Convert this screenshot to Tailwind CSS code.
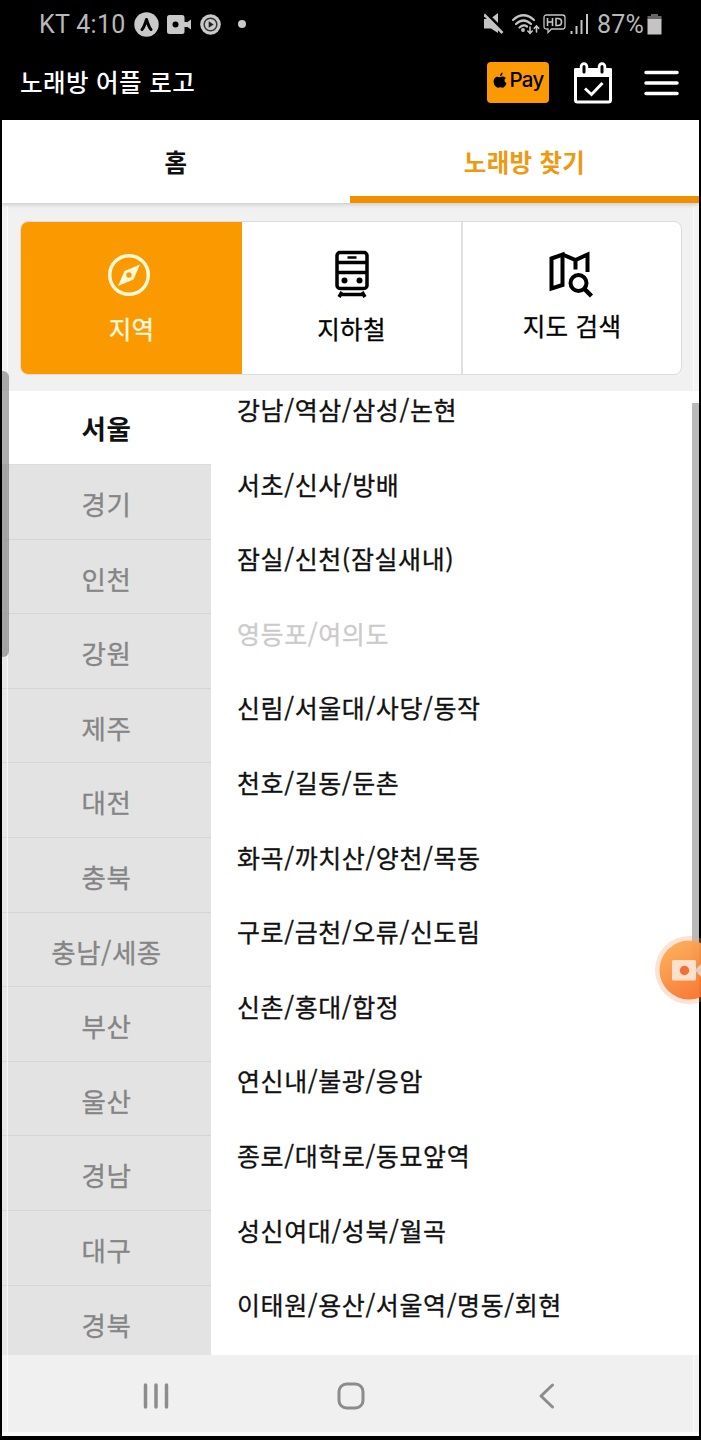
<!DOCTYPE html>
<html lang="ko">
<head>
<meta charset="utf-8">
<title>노래방 찾기</title>
<script src="https://cdn.jsdelivr.net/npm/@tailwindcss/browser@4"></script>
</head>
<body class="w-[701px] h-[1440px] overflow-hidden bg-black font-['Noto_Sans_CJK_KR',sans-serif]">
<div class="relative w-[701px] h-[1440px] overflow-hidden flex flex-col pl-[2px] pr-[2px] pb-[4px]">

  <!-- status bar -->
  <div class="h-[46px] shrink-0 flex items-center pt-[2px] pl-[37px] pr-[37px] text-[#b9b9b9] font-[Roboto,sans-serif] text-[25px] leading-none">
    <span class="w-[86px] whitespace-nowrap tracking-[0.3px]">KT 4:10</span>
    <svg class="ml-[9px]" width="25" height="25" viewBox="0 0 25 25"><circle cx="12.500" cy="12.500" r="12.200" fill="#c9c9c9"/><path d="M8 17.500 Q10 15.500 12.500 7.500 Q15 15.500 17 17.500" fill="none" stroke="#000" stroke-width="3" stroke-linecap="round" stroke-linejoin="round"/></svg>
    <svg class="ml-[8px]" width="24" height="19" viewBox="0 0 24 19"><rect x="0" y="0" width="17.500" height="19" rx="2.500" fill="#c9c9c9"/><path d="M17 9.500 L24 4.500 V14.500 Z M16 7 h4 v5 h-4z" fill="#c9c9c9"/><circle cx="8.500" cy="9.500" r="3" fill="#000"/></svg>
    <svg class="ml-[9px]" width="21" height="21" viewBox="0 0 21 21"><circle cx="10.500" cy="10.500" r="10.300" fill="#c9c9c9"/><circle cx="10.500" cy="10.500" r="6.300" fill="none" stroke="#333" stroke-width="1.500"/><path d="M8.700 7.300 L13.700 10.500 L8.700 13.700Z" fill="#222"/></svg>
    <span class="ml-[17px] size-[8px] rounded-full bg-[#c9c9c9]"></span>
    <div class="ml-auto flex items-center">
      <svg width="20" height="22" viewBox="0 0 20 22"><path d="M0 6 H6 L14 0 V20 L7 15.500 H0Z" fill="#c4c4c4"/><path d="M3 1 L21 19" stroke="#000" stroke-width="3"/><path d="M0 1.500 L18.500 20" stroke="#c4c4c4" stroke-width="2.600"/></svg>
      <svg class="ml-[8px]" width="28" height="22" viewBox="0 0 28 22" fill="none" stroke="#c4c4c4" stroke-width="2.200" stroke-linecap="round"><path d="M1 7 Q11.500 -2.500 22 7"/><path d="M4 11 Q11.500 4 19 11"/><path d="M7.500 14.500 Q11.500 11 15 13.500"/><circle cx="11" cy="17" r=".8" fill="#c4c4c4"/><path d="M18 14 V20 M15.800 18 L18 20.300 L20.200 18 M24.500 19 V13.500 M22.300 15.300 L24.500 13 L26.700 15.300" stroke-width="1.600"/></svg>
      <svg class="ml-[3px]" width="23" height="20" viewBox="0 0 23 20"><path d="M3.500 1 H19.500 Q22 1 22 3.500 V12.500 Q22 15 19.500 15 H8.500 L5 18.500 V15 H3.500 Q1 15 1 12.500 V3.500 Q1 1 3.500 1Z" fill="none" stroke="#c4c4c4" stroke-width="1.300"/><path d="M4.500 4 V12 M4.500 8 H9.500 M9.500 4 V12 M13 4.500 V11.500 H15 Q18.500 11.500 18.500 8 Q18.500 4.500 15 4.500 Z" fill="none" stroke="#c4c4c4" stroke-width="1.600"/></svg>
      <svg class="ml-[4px]" width="19" height="20" viewBox="0 0 19 20"><path d="M1.500 17 V20 M6.500 12 V20 M11.500 6 V20 M17 0 V20" stroke="#c4c4c4" stroke-width="2"/></svg>
      <span class="ml-[8px] w-[49px] whitespace-nowrap tracking-[0.2px]">87%</span>
      <svg class="ml-[1px]" width="15" height="22" viewBox="0 0 15 22"><path d="M4 1 H11 V3 H14.500 V7 H.5 V3 H4Z" fill="#666"/><rect x=".5" y="6" width="14" height="15.500" fill="#c4c4c4"/></svg>
    </div>
  </div>

  <!-- app header -->
  <header class="h-[74px] shrink-0 flex items-center pl-[18px] pr-[20px] text-white">
    <h1 class="text-[24.500px] leading-none font-medium whitespace-nowrap tracking-[0.4px] mt-[-2px]">노래방 어플 로고</h1>
    <div class="ml-auto flex items-center gap-[24px]">
      <div class="w-[62px] h-[41px] mt-[-2px] rounded-[4px] bg-[#fb9902] flex items-center justify-center text-black">
        <svg class="mt-[-4px]" width="14" height="17" viewBox="0 0 15 17"><path d="M10.300 0 Q10.500 3 7.500 4 Q7.400 1 10.300 0Z M7.500 5 Q11 3.300 13.700 5.700 Q10.500 8.500 14.500 11.500 Q13 15.700 10.800 16.300 Q8 15.300 5 16.300 Q1 14.500 .6 9.500 Q.8 5.500 4 4.500 Q5.500 4.300 7.500 5Z"/></svg>
        <span class="ml-[3px] mt-[-3px] font-[Inter,sans-serif] font-medium text-[20.500px] leading-none tracking-[-0.8px]">Pay</span>
      </div>
      <svg class="mt-[-1px]" width="40" height="42" viewBox="0 0 40 42"><rect x="2.500" y="8" width="35" height="32" rx="2" fill="none" stroke="#fff" stroke-width="3"/><path d="M1 7 Q1 6 3 6 H37 Q39 6 39 7 V15 H1Z" fill="#fff"/><path d="M11 10 V4.500 M29 10 V4.500" stroke="#fff" stroke-width="8.500" stroke-linecap="round"/><path d="M11 10 V4.500 M29 10 V4.500" stroke="#000" stroke-width="3" stroke-linecap="round"/><path d="M12 26.500 L18.500 32.500 L29.500 21" fill="none" stroke="#fff" stroke-width="3"/></svg>
      <svg class="ml-[7px]" width="35" height="26" viewBox="0 0 35 26"><path d="M2 2.500 H33 M2 13 H33 M2 23.500 H33" stroke="#fff" stroke-width="3.500" stroke-linecap="round"/></svg>
    </div>
  </header>

  <!-- tabs -->
  <nav class="relative z-10 h-[83px] shrink-0 flex bg-white shadow-[0_1px_5px_rgba(0,0,0,0.2)] text-[24.500px] leading-none font-bold tracking-[0.3px]">
    <div class="w-[348px] flex items-center justify-center pt-[2px] text-[#111]">홈</div>
    <div class="flex-1 flex items-center justify-center border-b-[7px] border-[#f09000] pt-[9px] text-[#ee9911]">노래방 찾기</div>
  </nav>

  <!-- search mode -->
  <section class="h-[188px] shrink-0 bg-[#f1f1f1] pt-[18px] pl-[18px] pr-[17px]">
    <div class="h-[154px] flex rounded-[8px] border border-[#dcdcdc] overflow-hidden bg-white text-[24.500px] leading-none tracking-[0.3px]">
      <div class="w-[221px] bg-[#fb9900] text-[#fffbe0] flex flex-col items-center pt-[31px]">
        <svg class="mr-[5px]" width="44" height="44" viewBox="0 0 44 44"><circle cx="22" cy="22" r="19.300" fill="none" stroke="#fff9d8" stroke-width="3.500"/><path fill-rule="evenodd" d="M33 11.500 L26.500 26.500 L11 33 L17.500 18Z M22 19.300 A2.700 2.700 0 1 0 22 24.700 A2.700 2.700 0 1 0 22 19.300Z" fill="#fff9d8"/></svg>
        <span class="mt-[20px] [-webkit-text-stroke:0.3px]">지역</span>
      </div>
      <div class="w-[219px] flex flex-col items-center pt-[28px] text-black">
        <svg width="36" height="50" viewBox="0 0 36 50" fill="none" stroke="#000" stroke-width="3.500"><rect x="3" y="2.500" width="30" height="36" rx="3"/><path d="M3 12.500 H33 M3 22.500 H33"/><path d="M13.500 7.500 H22.500" stroke-width="2.500"/><circle cx="10.500" cy="30.500" r="3" fill="#000" stroke="none"/><circle cx="25.500" cy="30.500" r="3" fill="#000" stroke="none"/><path d="M7 44.500 H29 M8 42 L5 47 M28 42 L31 47"/></svg>
        <span class="mt-[17px] [-webkit-text-stroke:0.3px]">지하철</span>
      </div>
      <div class="flex-1 border-l-2 border-[#e0e0e0] flex flex-col items-center pt-[29px] text-black">
        <svg class="mr-[2px]" width="46" height="48" viewBox="0 0 46 48" fill="none" stroke="#000" stroke-width="4"><path d="M3.500 7.500 L14.500 3.500 V34 L3.500 37.500Z" /><path d="M14.500 3.500 L27.500 9 L39.500 3.500 V21 M27.500 9 V18.500"/><circle cx="30.500" cy="32" r="8"/><path d="M36 37.500 L43.500 45" stroke-width="4.500"/></svg>
        <span class="mt-[15px] [-webkit-text-stroke:0.3px]">지도 검색</span>
      </div>
    </div>
  </section>

  <!-- region lists -->
  <main class="h-[964px] shrink-0 flex overflow-hidden bg-white leading-none">
    <div class="w-[209px] shrink-0 text-[26.500px] tracking-[0.5px] text-[#858585] text-center">
      <div class="h-[73px] pt-[24px] font-bold text-[#111]">서울</div>
      <div class="bg-[#e3e3e3] [-webkit-text-stroke:0.3px]">
        <div class="h-[74.600px] pt-[26px] border-t border-[#dcdcdc]">경기</div>
        <div class="h-[74.600px] pt-[26px] border-t border-[#d4d4d4]">인천</div>
        <div class="h-[74.600px] pt-[26px] border-t border-[#d4d4d4]">강원</div>
        <div class="h-[74.600px] pt-[26px] border-t border-[#d4d4d4]">제주</div>
        <div class="h-[74.600px] pt-[26px] border-t border-[#d4d4d4]">대전</div>
        <div class="h-[74.600px] pt-[26px] border-t border-[#d4d4d4]">충북</div>
        <div class="h-[74.600px] pt-[26px] border-t border-[#d4d4d4]">충남/세종</div>
        <div class="h-[74.600px] pt-[26px] border-t border-[#d4d4d4]">부산</div>
        <div class="h-[74.600px] pt-[26px] border-t border-[#d4d4d4]">울산</div>
        <div class="h-[74.600px] pt-[26px] border-t border-[#d4d4d4]">경남</div>
        <div class="h-[74.600px] pt-[26px] border-t border-[#d4d4d4]">대구</div>
        <div class="h-[74.600px] pt-[26px] border-t border-[#d4d4d4]">경북</div>
      </div>
    </div>
    <div class="flex-1 pl-[26px] pt-[6px] text-[25px] tracking-[0.6px] text-[#111] whitespace-nowrap [-webkit-text-stroke:0.3px]">
      <div class="h-[74.600px]">강남/역삼/삼성/논현</div>
      <div class="h-[74.600px]">서초/신사/방배</div>
      <div class="h-[74.600px]">잠실/신천(잠실새내)</div>
      <div class="h-[74.600px] text-[#cbcbcb]">영등포/여의도</div>
      <div class="h-[74.600px]">신림/서울대/사당/동작</div>
      <div class="h-[74.600px]">천호/길동/둔촌</div>
      <div class="h-[74.600px]">화곡/까치산/양천/목동</div>
      <div class="h-[74.600px]">구로/금천/오류/신도림</div>
      <div class="h-[74.600px]">신촌/홍대/합정</div>
      <div class="h-[74.600px]">연신내/불광/응암</div>
      <div class="h-[74.600px]">종로/대학로/동묘앞역</div>
      <div class="h-[74.600px]">성신여대/성북/월곡</div>
      <div class="h-[74.600px]">이태원/용산/서울역/명동/회현</div>
    </div>
  </main>

  <!-- system navigation -->
  <footer class="h-[81px] shrink-0 flex justify-between items-center pt-[4px] pl-[141px] pr-[144px] border-b-[4px] border-[#fafafa] bg-[#f0f0f0]">
    <svg width="26" height="26" viewBox="0 0 26 26"><path d="M2.500 2 V24 M13 2 V24 M23.500 2 V24" stroke="#8c8c8c" stroke-width="3.500" stroke-linecap="round"/></svg>
    <svg class="mr-[6px]" width="28" height="28" viewBox="0 0 28 28"><rect x="2" y="2" width="24" height="24" rx="7.500" fill="none" stroke="#8c8c8c" stroke-width="3"/></svg>
    <svg width="17" height="28" viewBox="0 0 17 28"><path d="M14.500 3 L3 14 L14.500 25" fill="none" stroke="#8c8c8c" stroke-width="3" stroke-linecap="round" stroke-linejoin="round"/></svg>
  </footer>

  <!-- overlays: screen-edge strips, scroll bars, floating recorder button -->
  <div class="absolute z-20 left-[2px] top-[206px] w-[6px] h-[1230px] bg-white/20 border-r border-white/60"></div>
  <div class="absolute z-20 left-[693px] top-[206px] w-[6px] h-[1230px] bg-white/20 border-l border-white/60"></div>
  <div class="absolute z-20 left-[2px] top-[371px] w-[7px] h-[286px] rounded-r-[6px] bg-[#777]/60"></div>
  <div class="absolute z-20 left-[692px] top-[403px] w-[7px] h-[567px] bg-[#8c8c8c]/60"></div>
  <svg class="absolute z-20 left-[652px] top-[932px]" width="49" height="74" viewBox="0 0 49 74">
    <defs><linearGradient id="rec" x1="0" y1="0" x2=".6" y2="1"><stop offset="0" stop-color="#fcb45c"/><stop offset=".5" stop-color="#fb9443"/><stop offset="1" stop-color="#f8742e"/></linearGradient></defs>
    <circle cx="37" cy="38" r="34" fill="#f8a078" fill-opacity=".3"/>
    <circle cx="37" cy="38" r="29.500" fill="url(#rec)" fill-opacity=".95"/>
    <rect x="20" y="28" width="24" height="20.500" rx="1.500" fill="#fde0cc"/>
    <path d="M43 38 L49 32 V45Z" fill="#ddd0c5"/>
    <circle cx="32.500" cy="38.500" r="4.700" fill="#f46e38"/>
  </svg>
</div>
</body>
</html>
